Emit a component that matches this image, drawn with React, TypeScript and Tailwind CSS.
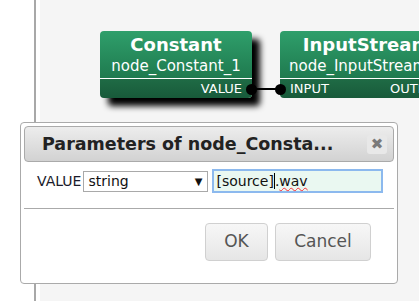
export default function App() {
  return (
    <div className="relative w-[419px] h-[301px] overflow-hidden bg-white flex font-['DejaVu_Sans',sans-serif]">
      <div className="w-[34px] shrink-0 bg-white" />
      <div className="w-[2px] shrink-0 bg-[#a8a8a8]" />
      <div className="w-[4px] shrink-0 bg-white" />
      <div className="relative flex-1 bg-[#f5f5f5]">
        {/* Constant node */}
        <div className="absolute left-[60px] top-[31px] w-[152px] rounded-[4px] shadow-[8px_8px_6px_#000] text-white">
          <div className="rounded-t-[4px] bg-gradient-to-b from-[#2f9f6b] to-[#1f7a4f] pt-[3px] pb-[2px] px-[10px] text-center border-b border-white">
            <div className="text-[18px] font-bold leading-[22px]">Constant</div>
            <div className="text-[15px] leading-[20px] whitespace-nowrap">node_Constant_1</div>
          </div>
          <div className="h-[19px] rounded-b-[4px] bg-gradient-to-b from-[#1f6b45] to-[#185a3a] flex items-center justify-end pr-[10px] text-[13px] leading-[19px]">
            VALUE
          </div>
        </div>
        {/* InputStream node */}
        <div className="absolute left-[240px] top-[31px] w-[173px] rounded-[4px] text-white">
          <div className="rounded-t-[4px] bg-gradient-to-b from-[#2f9f6b] to-[#1f7a4f] pt-[3px] pb-[2px] px-[9px] text-center border-b border-white">
            <div className="text-[18px] font-bold leading-[22px]">InputStream</div>
            <div className="text-[15px] leading-[20px] whitespace-nowrap">node_InputStream_1</div>
          </div>
          <div className="h-[19px] rounded-b-[4px] bg-gradient-to-b from-[#1f6b45] to-[#185a3a] flex items-center justify-between px-[10px] text-[13px] leading-[19px]">
            <span>INPUT</span>
            <span>OUTPUT</span>
          </div>
        </div>
        {/* wire + ports */}
        <div className="absolute left-[211px] top-[88px] w-[29px] h-[2px] bg-black" />
        <div className="absolute left-[206px] top-[84px] w-[11px] h-[11px] rounded-full bg-black" />
        <div className="absolute left-[235px] top-[84px] w-[11px] h-[11px] rounded-full bg-black" />
      </div>

      {/* Dialog */}
      <div className="absolute left-[20px] top-[122px] w-[378px] h-[162px] bg-white border border-[#aaa] rounded-[4px] p-[3px] flex flex-col">
        <div className="h-[36px] border border-[#aaa] rounded-[4px] bg-gradient-to-b from-[#ededed] to-[#d2d2d2] flex items-center pl-[17px] pr-[6px]">
          <span className="text-[17.5px] font-bold text-[#222] whitespace-nowrap">Parameters of node_Consta...</span>
          <div className="ml-auto w-[20px] h-[19px] bg-[#e8e8e8] rounded-[3px] flex items-center justify-center text-[15px] font-bold text-[#7a7a7a] leading-none">
            ✖
          </div>
        </div>
        <div className="mt-[7px] h-[24px] flex items-center pl-[13px]">
          <span className="text-[14px] text-[#1a1a2a] leading-[21px]">VALUE</span>
          <div className="ml-[2px] w-[125px] h-[21px] border border-[#a9a9a9] bg-white flex items-center pl-[4px] pr-[5px] text-[14px] text-[#111]">
            <span>string</span>
            <span className="ml-auto text-[10px]">▼</span>
          </div>
          <div className="ml-[4px] w-[171px] h-[24px] border-2 border-[#8cb9ee] bg-[#eaf8f1] flex items-center pl-[2px] text-[14px] text-[#111]">
            <span>[source]</span>
            <span className="w-px h-[16px] bg-black" />
            <span>.</span>
            <span className="underline decoration-wavy decoration-red-500 decoration-1">wav</span>
          </div>
        </div>
        <div className="mt-[15px] h-px bg-[#aaa]" />
        <div className="mt-[14px] flex justify-end gap-[7px] pr-[23px]">
          <div className="w-[63px] h-[38px] border border-[#d0d0d0] rounded-[4px] bg-gradient-to-b from-[#f7f7f7] to-[#e6e6e6] flex items-center justify-center text-[17px] text-[#555]">
            OK
          </div>
          <div className="w-[96px] h-[38px] border border-[#d0d0d0] rounded-[4px] bg-gradient-to-b from-[#f7f7f7] to-[#e6e6e6] flex items-center justify-center text-[17px] text-[#555]">
            Cancel
          </div>
        </div>
      </div>
    </div>
  );
}
